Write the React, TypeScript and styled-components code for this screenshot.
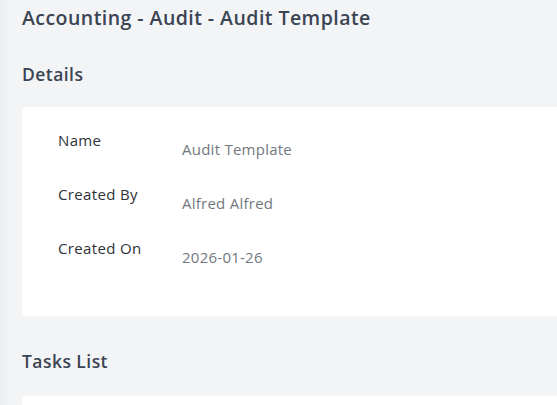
import React from 'react';
import styled, { createGlobalStyle } from 'styled-components';

const GlobalStyle = createGlobalStyle`
  html, body {
    margin: 0;
    padding: 0;
    background: #f3f4f6;
  }
  body {
    font-family: "Open Sans", "Liberation Sans", sans-serif;
  }
`;

const Page = styled.div`
  height: 405px;
  padding: 4px 0 0 22px;
  box-sizing: border-box;
  background: linear-gradient(90deg, #eceef1 0px, #f3f4f6 10px);
  overflow: hidden;
`;

const Title = styled.h1`
  margin: 0;
  font-size: 19.5px;
  line-height: 28px;
  font-weight: 600;
  color: #3b4453;
  letter-spacing: 0.45px;
`;

const SectionTitle = styled.h2<{ $top: number }>`
  margin: ${(p) => p.$top}px 0 0;
  font-size: 17.5px;
  line-height: 24px;
  font-weight: 600;
  color: #3b4453;
  letter-spacing: 0.45px;
`;

const Card = styled.div<{ $top: number }>`
  margin-top: ${(p) => p.$top}px;
  margin-right: -8px;
  background: #ffffff;
  border-radius: 4px;
  padding: 23px 36px 24px;
`;

const Row = styled.div`
  display: grid;
  grid-template-columns: 124px 1fr;
  height: 54px;
  align-items: start;
`;

const Label = styled.div`
  font-size: 15px;
  line-height: 20px;
  font-weight: 500;
  color: #2f3237;
  letter-spacing: 0.35px;
`;

const Value = styled.div`
  margin-top: 9px;
  font-size: 15px;
  line-height: 20px;
  color: #737880;
  letter-spacing: 0.25px;
`;

const details = [
  { label: 'Name', value: 'Audit Template' },
  { label: 'Created By', value: 'Alfred Alfred' },
  { label: 'Created On', value: '2026-01-26' },
];

export default function App() {
  return (
    <>
      <GlobalStyle />
      <Page>
        <Title>Accounting - Audit - Audit Template</Title>
        <SectionTitle $top={30}>Details</SectionTitle>
        <Card $top={21}>
          {details.map((d) => (
            <Row key={d.label}>
              <Label>{d.label}</Label>
              <Value>{d.value}</Value>
            </Row>
          ))}
        </Card>
        <SectionTitle $top={33}>Tasks List</SectionTitle>
        <Card $top={23} style={{ height: 20 }} />
      </Page>
    </>
  );
}
